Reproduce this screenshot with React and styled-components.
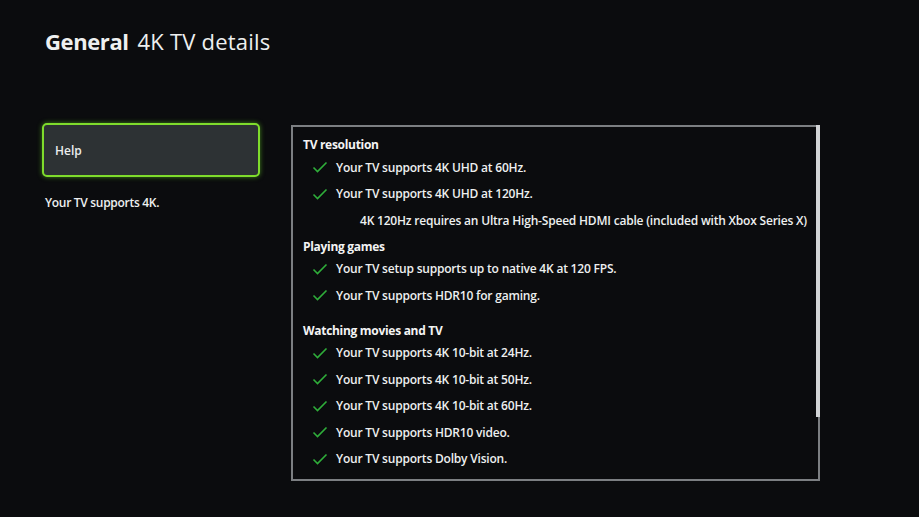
import styled, { createGlobalStyle } from 'styled-components'

const GlobalStyle = createGlobalStyle`
    html, body {
        margin: 0;
        padding: 0;
        background: #0b0c0e;
    }
    body {
        font-family: "Open Sans", "Noto Sans", sans-serif;
        color: #f2f2f2;
    }
`

const sections = [
    {
        title: 'TV resolution',
        gap: 0,
        rows: [
            { text: 'Your TV supports 4K UHD at 60Hz.', ok: true },
            { text: 'Your TV supports 4K UHD at 120Hz.', ok: true },
            { text: '4K 120Hz requires an Ultra High-Speed HDMI cable (included with Xbox Series X)', note: true },
        ],
    },
    {
        title: 'Playing games',
        gap: 4,
        rows: [
            { text: 'Your TV setup supports up to native 4K at 120 FPS.', ok: true },
            { text: 'Your TV supports HDR10 for gaming.', ok: true },
        ],
    },
    {
        title: 'Watching movies and TV',
        gap: 13,
        rows: [
            { text: 'Your TV supports 4K 10-bit at 24Hz.', ok: true },
            { text: 'Your TV supports 4K 10-bit at 50Hz.', ok: true },
            { text: 'Your TV supports 4K 10-bit at 60Hz.', ok: true },
            { text: 'Your TV supports HDR10 video.', ok: true },
            { text: 'Your TV supports Dolby Vision.', ok: true },
        ],
    },
]

const Check = () => (
    <svg width="16" height="12" viewBox="0 0 16 12">
        <path d="M1.5 6.5 L5.5 10.5 L14.5 1.5" fill="none" stroke="#2fae3a" strokeWidth="1.6" />
    </svg>
)

const App = () => {
    return (
        <Page>
            <GlobalStyle />
            <Header>
                <HeaderBold>General</HeaderBold>
                <HeaderLight>4K TV details</HeaderLight>
            </Header>
            <Main>
                <Side>
                    <HelpButton>Help</HelpButton>
                    <SideText>Your TV supports 4K.</SideText>
                </Side>
                <Panel>
                    {sections.map((section, i) => (
                        <Section key={i} gap={section.gap}>
                            <SectionTitle>{section.title}</SectionTitle>
                            {section.rows.map((row, j) => (
                                <Row key={j} note={row.note}>
                                    {row.ok && <CheckBox><Check /></CheckBox>}
                                    <RowText>{row.text}</RowText>
                                </Row>
                            ))}
                        </Section>
                    ))}
                    <ScrollThumb />
                </Panel>
            </Main>
        </Page>
    )
}

const Page = styled.div`
    width: 919px;
    height: 517px;
    box-sizing: border-box;
    padding: 26px 0 0 45px;
    display: flex;
    flex-direction: column;
    overflow: hidden;
`

const Header = styled.h1`
    margin: 0;
    display: flex;
    align-items: baseline;
    gap: 9px;
    font-family: "Open Sans", sans-serif;
    font-size: 22px;
    line-height: 30px;
    color: #eef0f0;
`

const HeaderBold = styled.span`
    font-weight: 700;
    letter-spacing: -0.4px;
`

const HeaderLight = styled.span`
    font-weight: 400;
    letter-spacing: 0.2px;
`

const Main = styled.div`
    display: flex;
    margin-top: 67px;
    margin-left: -3px;
    gap: 31px;
`

const Side = styled.div`
    width: 218px;
    display: flex;
    flex-direction: column;
`

const HelpButton = styled.div`
    height: 54px;
    box-sizing: border-box;
    border: 2.5px solid #7fdc2c;
    border-radius: 5px;
    background: #2d3234;
    box-shadow: 0 0 5px rgba(110, 220, 40, 0.55);
    display: flex;
    align-items: center;
    padding-left: 11px;
    font-size: 12px;
    font-weight: 600;
    color: #eceeee;
`

const SideText = styled.div`
    margin-top: 17px;
    margin-left: 3px;
    font-size: 12px;
    font-weight: 600;
    letter-spacing: -0.3px;
    color: #eef0f0;
`

const Panel = styled.div`
    position: relative;
    margin-top: 2px;
    width: 529px;
    height: 356px;
    box-sizing: border-box;
    border: 2px solid #7c7f82;
    padding: 9px 0 0 10px;
`

const ScrollThumb = styled.div`
    position: absolute;
    right: -2px;
    top: -2px;
    width: 4px;
    height: 292px;
    background: #d2d4d6;
`

const Section = styled.div`
    margin-top: ${props => props.gap}px;
`

const SectionTitle = styled.div`
    height: 18px;
    line-height: 18px;
    font-size: 12px;
    font-weight: 700;
    letter-spacing: -0.3px;
    color: #f4f4f4;
`

const Row = styled.div`
    height: 26.5px;
    display: flex;
    align-items: center;
    padding-left: ${props => (props.note ? '57px' : '9px')};
`

const CheckBox = styled.span`
    width: 24px;
    display: flex;
    align-items: center;
`

const RowText = styled.span`
    font-size: 12px;
    font-weight: 600;
    letter-spacing: -0.2px;
    color: #eef0f0;
    white-space: nowrap;
`

export default App
